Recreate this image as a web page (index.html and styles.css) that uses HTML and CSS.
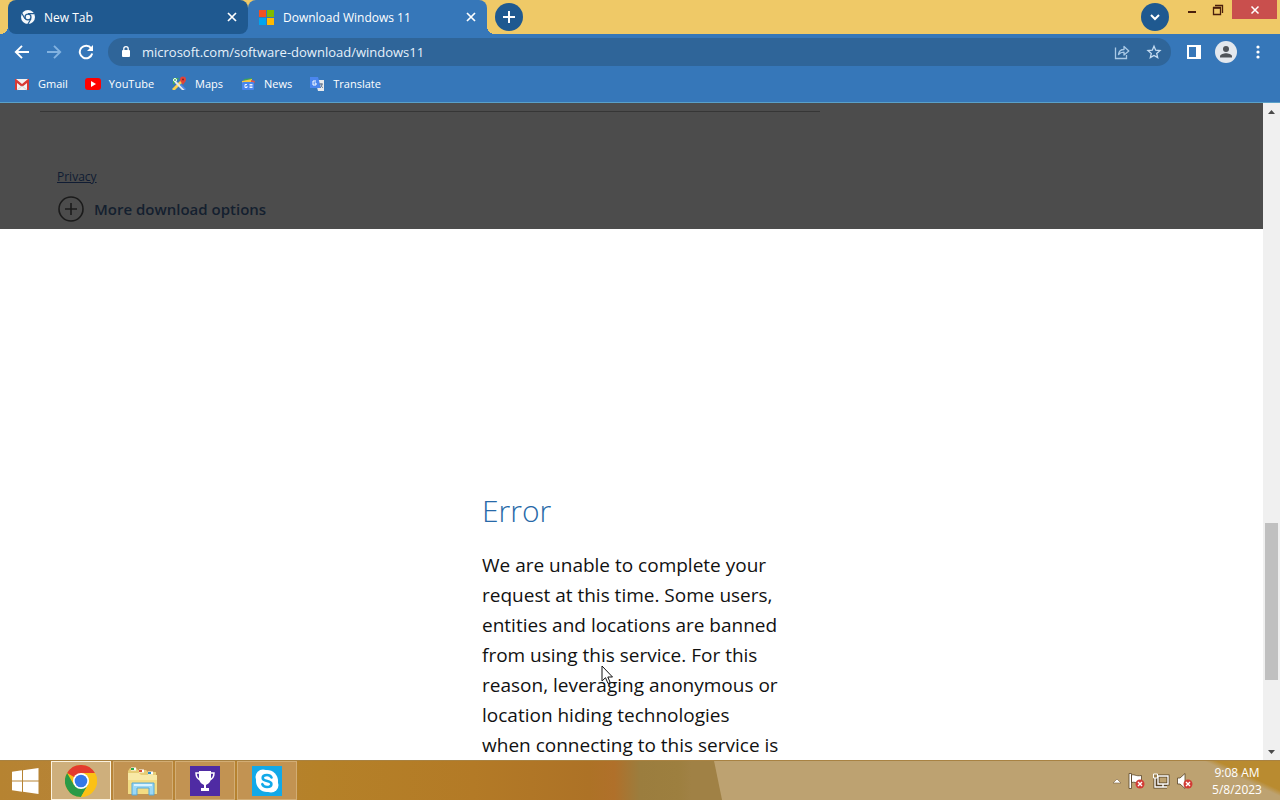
FILE: index.html
```html
<!DOCTYPE html>
<html lang="en">
<head>
<meta charset="utf-8">
<title>Download Windows 11</title>
<link rel="stylesheet" href="styles.css">
</head>
<body>
<header class="browser">
  <div class="tabstrip">
    <div class="tabs">
      <div class="tab tab-idle">
        <svg class="favicon" width="16" height="16" viewBox="0 0 16 16"><circle cx="8" cy="8" r="7" fill="#f5f9fc"/><circle cx="8" cy="8" r="3.6" fill="#1f5990"/><circle cx="8" cy="8" r="2.3" fill="#f5f9fc"/><path d="M8 4.6h6.4M5 9.8L1.8 4.3M11 9.8l-3.2 5.4" stroke="#1f5990" stroke-width="1.2"/></svg>
        <span class="tab-title">New Tab</span>
        <button class="tab-close" aria-label="Close New Tab"><svg width="10" height="10" viewBox="0 0 10 10"><path d="M1 1l8 8M9 1L1 9" stroke="#fff" stroke-width="1.7"/></svg></button>
      </div>
      <div class="tab tab-active">
        <svg class="favicon" width="16" height="16" viewBox="0 0 16 16"><path fill="#f25022" d="M0 1h7v7H0z"/><path fill="#7fba00" d="M8 1h7v7H8z"/><path fill="#00a4ef" d="M0 9h7v7H0z"/><path fill="#ffb900" d="M8 9h7v7H8z"/></svg>
        <span class="tab-title">Download Windows 11</span>
        <button class="tab-close" aria-label="Close Download Windows 11"><svg width="10" height="10" viewBox="0 0 10 10"><path d="M1 1l8 8M9 1L1 9" stroke="#fff" stroke-width="1.7"/></svg></button>
      </div>
    </div>
    <button class="round" aria-label="New tab"><svg width="14" height="14" viewBox="0 0 14 14"><path d="M7 1v12M1 7h12" stroke="#fff" stroke-width="2"/></svg></button>
    <div class="window-side">
      <button class="round" aria-label="Search tabs"><svg width="12" height="12" viewBox="0 0 12 12"><path d="M2 4l4 4 4-4" fill="none" stroke="#fff" stroke-width="2"/></svg></button>
      <button class="win-btn" aria-label="Minimize"><svg width="10" height="12" viewBox="0 0 10 12"><path d="M1 8h8" stroke="#4a1f0c" stroke-width="2"/></svg></button>
      <button class="win-btn" aria-label="Restore"><svg width="12" height="12" viewBox="0 0 12 12" fill="none" stroke="#4a1f0c"><path d="M1 3.500h7.500v7H1.500V3" stroke-width="1.300"/><path d="M1 4h8" stroke-width="1.500"/><path d="M3 1.500h7.500V9" stroke-width="1.300"/></svg></button>
      <button class="win-btn win-close" aria-label="Close"><svg width="10" height="10" viewBox="0 0 10 10"><path d="M1.500 1.500l7 7M8.500 1.500l-7 7" stroke="#fff" stroke-width="1.500"/></svg></button>
    </div>
  </div>
  <div class="toolbar">
    <button class="tool" aria-label="Back"><svg width="16" height="16" viewBox="0 0 16 16"><path d="M15 8H2M8 1.800L1.800 8 8 14.200" fill="none" stroke="#fff" stroke-width="1.900"/></svg></button>
    <button class="tool" aria-label="Forward"><svg width="16" height="16" viewBox="0 0 16 16"><path d="M1 8h13M8 1.800L14.200 8 8 14.200" fill="none" stroke="#82b2e0" stroke-width="1.900"/></svg></button>
    <button class="tool" aria-label="Reload"><svg width="16" height="16" viewBox="0 0 16 16"><path d="M13.200 4.300A6.300 6.300 0 1 0 14.200 9.500" fill="none" stroke="#fff" stroke-width="2"/><path d="M15 1v6H9z" fill="#fff"/></svg></button>
    <div class="omnibox">
      <svg width="10" height="14" viewBox="0 0 10 14"><rect x="1" y="5" width="8" height="7" rx="1" fill="#fff"/><path d="M2.800 6V3.800a2.200 2.200 0 0 1 4.400 0V6" fill="none" stroke="#fff" stroke-width="1.300"/></svg>
      <input class="url" type="text" aria-label="Address" value="microsoft.com/software-download/windows11">
      <button class="omni-btn" aria-label="Share"><svg width="16" height="16" viewBox="0 0 16 16" fill="none" stroke="#a9c9e6" stroke-width="1.300"><path d="M1.500 3.500v11h11V11"/><path d="M4.500 10.500c.4-3.500 2.500-5 5.500-5V2.500L14.800 7 10 11V8.200c-2.500 0-4 .5-5.500 2.300z" stroke-linejoin="round"/></svg></button>
      <button class="omni-btn" aria-label="Bookmark"><svg width="16" height="16" viewBox="0 0 16 16"><path d="M8 2.200l1.700 4 4.300.4-3.300 2.800 1 4.200L8 11.400l-3.700 2.200 1-4.200L2 6.600l4.300-.4z" fill="none" stroke="#c5dcf1" stroke-width="1.300"/></svg></button>
    </div>
    <button class="tool" aria-label="Side panel"><svg width="14" height="14" viewBox="0 0 14 14"><path fill="#fff" fill-rule="evenodd" d="M0 0h14v14H0zM2 2v10h7V2z"/></svg></button>
    <button class="tool" aria-label="Profile"><svg width="22" height="22" viewBox="0 0 22 22"><circle cx="11" cy="11" r="11" fill="#e3e8ee"/><circle cx="11" cy="8" r="3" fill="#50555b"/><path d="M5 16.500v-1.300c0-2 4-3 6-3s6 1 6 3v1.300z" fill="#50555b"/></svg></button>
    <button class="tool" aria-label="Menu"><svg width="4" height="14" viewBox="0 0 4 14" fill="#fff"><circle cx="2" cy="2" r="1.600"/><circle cx="2" cy="7" r="1.600"/><circle cx="2" cy="12" r="1.600"/></svg></button>
  </div>
  <nav class="bookmarks">
    <a href="#gmail"><svg width="16" height="16" viewBox="0 0 16 16"><path fill="#f4f2f2" d="M1 3h14v11H1z"/><path fill="#d93a35" d="M1 14V3h1l6 5 6-5h1v11h-2V7l-5 4-5-4v7z"/><path d="M3 14l5-4 5 4" fill="none" stroke="#d5d5d5"/></svg>Gmail</a>
    <a href="#youtube"><svg width="16" height="16" viewBox="0 0 16 16"><rect y="2" width="16" height="12" rx="3" fill="#f00"/><path d="M6 5l5 3-5 3z" fill="#fff"/></svg>YouTube</a>
    <a href="#maps"><svg width="16" height="16" viewBox="0 0 16 16"><path fill="#3eaa58" d="M2 2h6L2 9z"/><path fill="#fbd04b" d="M1 13L11 3l2 2L4 14H2z"/><path fill="#dfe5eb" d="M5 5l9 9h-3L3.500 6.500z"/><path fill="#4f88ec" d="M10 8l5 5-1 1-5-5z"/><circle cx="4" cy="4" r="1.500" fill="none" stroke="#fff"/><path d="M12 9c-.5-2-3-3-3-5.500a3 3 0 0 1 6 0C15 6 12.500 7 12 9z" fill="#e0443a"/><circle cx="12" cy="3.500" r="1" fill="#8b211b"/></svg>Maps</a>
    <a href="#news"><svg width="16" height="16" viewBox="0 0 16 16"><path fill="#3ca45a" d="M4 3l8-1v5H4z"/><path fill="#f7c843" d="M2 5l10-2v4H2z"/><path fill="#e2544a" d="M11 4l4 1-1 3h-3z"/><rect x="2" y="6" width="12" height="8" rx="1" fill="#4a86ee"/><path d="M7 8.500H5v3h2V10M9.500 8.500h3M9.500 10h3M9.500 11.500h3" fill="none" stroke="#fff" stroke-width=".9"/></svg>News</a>
    <a href="#translate"><svg width="16" height="16" viewBox="0 0 16 16"><path fill="#e8eaed" d="M6 4h9v11H9z"/><path fill="#4a86ee" d="M1 1h8l3 11H1z"/><path d="M7 5H4v4h3V7H5.500" fill="none" stroke="#fff"/><path d="M10 8h4M12 7v1c0 2 1 3 2 4M13 8c0 2-1 3-2 4" fill="none" stroke="#667b91"/></svg>Translate</a>
  </nav>
</header>
<main class="viewport">
  <div class="page">
    <section class="dimmed">
      <hr class="rule">
      <a class="privacy" href="#privacy">Privacy</a>
      <button class="more"><svg width="26" height="26" viewBox="0 0 26 26" fill="none" stroke="#1b1b1b" stroke-width="1.600"><circle cx="13" cy="13" r="12"/><path d="M13 7v12M7 13h12"/></svg>More download options</button>
    </section>
    <section class="dialog">
      <h1>Error</h1>
      <p>We are unable to complete your<br>request at this time. Some users,<br>entities and locations are banned<br>from using this service. For this<br>reason, leveraging anonymous or<br>location hiding technologies<br>when connecting to this service is</p>
    </section>
  </div>
  <div class="scrollbar">
    <svg width="17" height="17" viewBox="0 0 17 17"><path d="M5 11l3.500-4L12 11z" fill="#4b4b4b"/></svg>
    <div class="track"><div class="thumb"></div></div>
    <svg width="17" height="17" viewBox="0 0 17 17"><path d="M5 7l3.500 4L12 7z" fill="#4b4b4b"/></svg>
  </div>
</main>
<footer class="taskbar">
  <button class="start" aria-label="Start"><svg width="28" height="26" viewBox="0 0 28 26" fill="#fff"><path d="M1 3.700L11 2.300v10.200H1zM12 2.200L27.500 0v12.500H12zM1 13.500h10v10.200L1 22.300zM12 13.500h15.500V26L12 23.800z"/></svg></button>
  <button class="task task-on" aria-label="Chrome"><svg width="32" height="32" viewBox="0 0 32 32"><circle cx="16" cy="16" r="16" fill="#fbc116"/><path d="M16 16L2.140 8A16 16 0 0 1 29.860 8H16z" fill="#e33b2e"/><path d="M2.140 8A16 16 0 0 0 16 32l6.900-12H16L9 20z" fill="#2a9a47"/><path d="M16 8h13.860A16 16 0 0 1 16 32l6.900-12z" fill="#fbc116"/><circle cx="16" cy="16" r="8" fill="#fff"/><circle cx="16" cy="16" r="6.300" fill="#3478e8"/></svg></button>
  <button class="task" aria-label="File Explorer"><svg width="32" height="32" viewBox="0 0 32 32"><path d="M1 6l2-3h6l2 2h8l2 2h8v21H1z" fill="#e7cd75"/><path d="M4 4h5M12 6h5M21 8h5" stroke="#fff" stroke-width="3"/><path d="M4 4h3" stroke="#2ba84a" stroke-width="2"/><path d="M12 6h3" stroke="#d75238" stroke-width="2"/><path d="M21 8h3" stroke="#2e91c7" stroke-width="2"/><path d="M1 8h11l2 2h16v19H1z" fill="#f8e9a6"/><path d="M1 15h29v14H1z" fill="#f3dc83"/><path d="M5 30V18h22v12h-5v-7H10v7z" fill="#9bd8f5" stroke="#58a9d5"/><path d="M7 20h18" stroke="#d9f3ff" stroke-width="2"/></svg></button>
  <button class="task" aria-label="Trophy"><svg width="30" height="30" viewBox="0 0 30 30"><path fill="#4f2ba3" d="M0 0h30v30H0z"/><path fill="#fff" d="M9 5h12v7c0 4-3 6-5 7v3h3v3h-8v-3h3v-3c-2-1-5-3-5-7z"/><path d="M9 7H6c0 4 1 6 5 7M21 7h3c0 4-1 6-5 7" fill="none" stroke="#fff" stroke-width="1.500"/></svg></button>
  <button class="task" aria-label="Skype"><svg width="30" height="30" viewBox="0 0 30 30"><path fill="#12a9e8" d="M0 0h30v30H0z"/><circle cx="11" cy="11" r="7.500" fill="#fff"/><circle cx="19" cy="19" r="7.500" fill="#fff"/><circle cx="15" cy="15" r="11" fill="#fff"/><path d="M19.500 11.500c-1-2-3-2.500-4.500-2.500-2.500 0-4.300 1-4.300 2.900 0 4.200 8.700 1.900 8.700 6 0 2-2 3.100-4.400 3.100-2.300 0-4-1-4.700-2.900" fill="none" stroke="#12a9e8" stroke-width="2.600" stroke-linecap="round"/></svg></button>
  <div class="wallpaper" aria-hidden="true"><div class="sand"></div></div>
  <div class="tray">
    <svg width="10" height="6" viewBox="0 0 10 6"><path d="M1 5l4-4 4 4z" fill="#fff" stroke="#7b6240" stroke-width=".6"/></svg>
    <svg width="18" height="18" viewBox="0 0 18 18"><path d="M1 1.500h2.500V16.500H1zM3.500 3c3-1 4 1.500 10 .5v7c-5 1-7-1-10 0z" fill="#fff" stroke="#594427" stroke-width=".8"/><circle cx="12" cy="12" r="4.500" fill="#d23b35"/><path d="M10 10l4 4M14 10l-4 4" stroke="#fff" stroke-width="1.400"/></svg>
    <svg width="18" height="18" viewBox="0 0 18 18"><g fill="none" stroke="#594427" stroke-width="3"><path d="M6 4h10v8H6zM11 12v3M7 15h8M3 6v9h4"/></g><g fill="none" stroke="#fff" stroke-width="1.400"><path d="M6 4h10v8H6zM11 12v3M7 15h8M3 6v9h4"/></g><path d="M1.500 2h4v4h-4z" fill="#9b8050" stroke="#fff"/></svg>
    <svg width="18" height="18" viewBox="0 0 18 18"><path d="M1.500 6H4l5-4.500v15L4 12H1.500z" fill="#fff" stroke="#594427" stroke-width=".8"/><circle cx="12" cy="12" r="4.500" fill="#d23b35"/><path d="M10 10l4 4M14 10l-4 4" stroke="#fff" stroke-width="1.400"/></svg>
  </div>
  <div class="clock"><span>9:08 AM</span><span>5/8/2023</span></div>
</footer>
<svg class="cursor" width="13" height="20" viewBox="0 0 13 20"><path d="M1 1v15l3.500-3.300L7 18.500l2.200-1L6.800 12h4.700z" fill="#fff" stroke="#111"/></svg>
</body>
</html>
```
FILE: styles.css
```css
* { box-sizing: border-box; }
body {
  margin: 0;
  height: 100vh;
  display: flex;
  flex-direction: column;
  overflow: hidden;
  background: #fff;
  font-family: "Open Sans", "Noto Sans", sans-serif;
  font-size: 12px;
}
button {
  display: flex;
  align-items: center;
  justify-content: center;
  margin: 0;
  padding: 0;
  border: 0;
  background: none;
  font: inherit;
}
svg { flex: none; display: block; }

.browser { background: #3677b9; color: #fff; border-bottom: 1px solid #5aa0c8; flex: none; }
.tabstrip { display: flex; height: 34px; background: #efc967; padding-left: 8px; }
.tabs { display: flex; position: relative; width: 479px; }
.tabs::before, .tabs::after {
  content: "";
  position: absolute;
  bottom: 0;
  width: 8px;
  height: 8px;
}
.tabs::before { left: -8px; background: radial-gradient(circle at 0 0, transparent 8px, #3677b9 8px); }
.tabs::after { right: -8px; background: radial-gradient(circle at 100% 0, transparent 8px, #3677b9 8px); }
.tab {
  flex: 1;
  display: flex;
  align-items: center;
  gap: 8px;
  padding: 0 11px 0 12px;
  background: #3677b9;
  border-radius: 8px 8px 0 0;
}
.tab-idle {
  background: #1f5990;
  border-radius: 8px;
  box-shadow: 0 8px 0 #3677b9;
}
.tab-active { padding-left: 11px; }
.tab-title { flex: 1; }
.tab-close { width: 10px; height: 16px; }
.round {
  width: 28px;
  height: 28px;
  border-radius: 50%;
  background: #1f5990;
  margin: 3px 0 0 8px;
}
.window-side { display: flex; margin-left: auto; }
.win-btn { width: 26px; height: 19px; }
.window-side .round { margin-right: 10px; }
.win-close { width: 45px; background: #c94f4d; margin: 0 3px 0 1px; }

.toolbar { display: flex; align-items: center; height: 36px; padding: 0 6px; position: relative; background: #3677b9; }
.tool { width: 32px; height: 28px; }
.omnibox {
  flex: 1;
  display: flex;
  align-items: center;
  height: 28px;
  margin: 0 7px 0 6px;
  padding: 0 1px 0 13px;
  border-radius: 14px;
  background: #2f6599;
}
.url {
  flex: 1;
  min-width: 0;
  margin-left: 11px;
  padding: 0;
  border: 0;
  outline: 0;
  background: none;
  color: #e6f1fb;
  font: inherit;
  font-size: 13px;
}
.omni-btn { width: 32px; height: 28px; }
.bookmarks { display: flex; align-items: center; gap: 17px; height: 32px; padding: 0 14px 5px; font-size: 11px; font-weight: 500; }
.bookmarks a { display: flex; align-items: center; gap: 8px; color: #fff; text-decoration: none; }

.viewport { flex: 1; min-height: 0; display: flex; overflow: hidden; }
.page { flex: 1; min-width: 0; }
.dimmed { background: #4c4c4c; padding: 8px 40px 7px; }
.rule { width: 66%; max-width: 780px; margin: 0 0 56px; border: 0; border-top: 1px solid #363636; }
.privacy { display: block; width: max-content; margin-left: 17px; color: #101c33; line-height: 18px; }
.more {
  gap: 10px;
  margin: 10px 0 0 18px;
  height: 26px;
  color: #14202f;
  font-size: 15px;
  font-weight: 600;
}
.dialog { width: 300px; margin-left: 482px; padding-top: 260px; color: #111; }
.dialog h1 { margin: 0; color: #2769a8; font-size: 30px; font-weight: 300; line-height: 44px; }
.dialog p { margin: 17px 0 0; font-size: 19px; line-height: 30px; white-space: nowrap; }

.scrollbar { width: 17px; display: flex; flex-direction: column; background: #f0f0f0; }
.track { flex: 1; display: grid; grid-template-rows: 403fr 157fr 63fr; padding: 0 2px; }
.thumb { grid-row: 2; background: #c0c0c0; }

.taskbar {
  flex: none;
  display: flex;
  align-items: center;
  height: 40px;
  background: linear-gradient(90deg, #b68331 0, #b7843a 10%, #b58128 25%, #b37a26 37%, #ad7226 46%, #b0702a 48%, #9b7d3e 50%, #9d7f3f 53%, #a08145 54%);
  border-top: 1px solid #a88242;
  color: #fff;
}
.start { width: 49px; height: 39px; }
.task {
  width: 60px;
  height: 39px;
  margin-left: 2px;
  border: 1px solid #d2ad74;
  background: #c29352;
}
.task-on { border-color: #fbf2df; background: #ceaf7c; }
.wallpaper { flex: 1; align-self: stretch; display: flex; justify-content: flex-end; margin-right: -178px; }
.sand {
  width: 58%;
  background: linear-gradient(25deg, #bda271 0 87%, #b98b30 89%);
  clip-path: polygon(0 0, 100% 0, 100% 100%, 8px 100%);
}
.tray { display: flex; align-items: center; gap: 6px; z-index: 1; }
.clock {
  width: 86px;
  z-index: 1;
  display: flex;
  flex-direction: column;
  align-items: center;
  font-size: 12px;
  line-height: 17px;
}
.cursor { position: absolute; left: 601px; top: 665px; }
```
